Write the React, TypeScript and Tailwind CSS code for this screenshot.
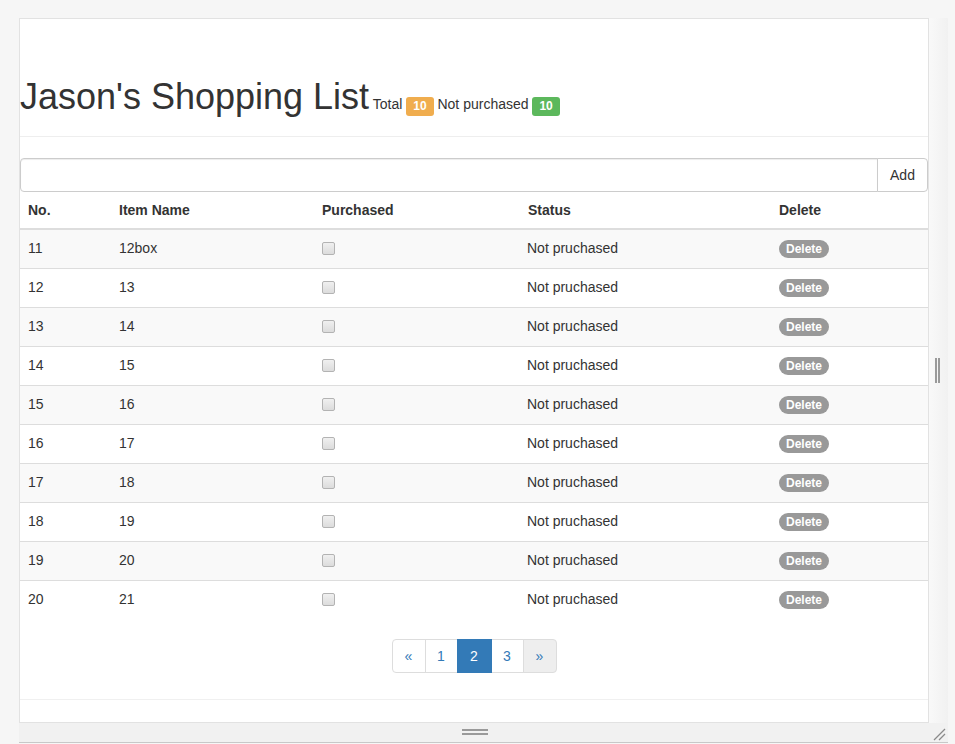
import React from "react";

const rows = [
  { no: 11, name: "12box" },
  { no: 12, name: "13" },
  { no: 13, name: "14" },
  { no: 14, name: "15" },
  { no: 15, name: "16" },
  { no: 16, name: "17" },
  { no: 17, name: "18" },
  { no: 18, name: "19" },
  { no: 19, name: "20" },
  { no: 20, name: "21" },
];

const grid = "grid grid-cols-[91px_203px_206px_251px_157px]";

export default function App() {
  return (
    <div className="min-h-[744px] w-[955px] bg-[#f6f6f6] font-['Liberation_Sans',Arial,sans-serif] text-[14px] text-[#333] pt-[18px] pl-[19px]">
      <div className="flex">
        {/* panel */}
        <div className="w-[910px] h-[705px] bg-white border border-[#e2e2e2] flex flex-col">
          <div className="pt-[58px] pb-[19px] border-b border-[#eee]">
            <h1 className="text-[36px] leading-[40px] font-normal whitespace-nowrap">
              Jason's Shopping List
              <span className="text-[14px] leading-none">
                {" "}Total{" "}
                <span className="inline-block bg-[#f0ad4e] text-white font-bold text-[12px] leading-none px-[7px] pt-[3px] pb-[4px] rounded-[3px] relative top-[1px]">10</span>
                {" "}Not purchased{" "}
                <span className="inline-block bg-[#5cb85c] text-white font-bold text-[12px] leading-none px-[7px] pt-[3px] pb-[4px] rounded-[3px] relative top-[1px]">10</span>
              </span>
            </h1>
          </div>

          <div className="mt-[21px] flex h-[34px]">
            <div className="flex-1 border border-[#ccc] rounded-l-[4px] shadow-[inset_0_1px_1px_rgba(0,0,0,0.075)]" />
            <div className="-ml-px w-[51px] border border-[#ccc] rounded-r-[4px] bg-white flex items-center justify-center text-[#333]">
              Add
            </div>
          </div>

          {/* table */}
          <div className={`${grid} h-[38px] border-b-2 border-[#ddd] font-bold items-center`}>
            <div className="pl-2">No.</div>
            <div className="pl-2">Item Name</div>
            <div className="pl-2">Purchased</div>
            <div className="pl-2">Status</div>
            <div className="pl-2">Delete</div>
          </div>
          {rows.map((r, i) => (
            <div
              key={r.no}
              className={`${grid} items-center pb-[1px] ${i === 0 ? "h-[38px]" : "h-[39px] border-t border-[#ddd]"} ${i % 2 === 0 ? "bg-[#f9f9f9]" : "bg-white"}`}
            >
              <div className="pl-2">{r.no}</div>
              <div className="pl-2">{r.name}</div>
              <div className="pl-2 flex items-center">
                <span className="block w-[13px] h-[13px] border border-[#b3b3b3] rounded-[2px] bg-gradient-to-b from-[#f0f0f0] to-[#dcdcdc]" />
              </div>
              <div className="pl-[7px]">Not pruchased</div>
              <div className="pl-2 flex items-center">
                <span className="inline-block bg-[#999] text-white font-bold text-[12px] leading-none px-[7px] pt-[3px] pb-[3px] rounded-[10px]">Delete</span>
              </div>
            </div>
          ))}

          <div className="mt-[20px] flex justify-center">
            <div className="flex h-[34px] text-[#337ab7]">
              <div className="w-[34px] border border-[#ddd] rounded-l-[4px] bg-white flex items-center justify-center">«</div>
              <div className="-ml-px w-[33px] border border-[#ddd] bg-white flex items-center justify-center">1</div>
              <div className="-ml-px w-[35px] border border-[#337ab7] bg-[#337ab7] text-white flex items-center justify-center relative">2</div>
              <div className="-ml-px w-[33px] border border-[#ddd] bg-white flex items-center justify-center">3</div>
              <div className="-ml-px w-[34px] border border-[#ddd] rounded-r-[4px] bg-[#eee] flex items-center justify-center">»</div>
            </div>
          </div>

          <div className="mt-[26px] border-t border-[#f0f0f0]" />
        </div>

        {/* right gutter */}
        <div className="w-[19px] h-[705px] bg-gradient-to-r from-[#f9f9f9] to-[#f1f1f1] flex items-center justify-center">
          <div className="flex gap-[1px] ml-[-3px]">
            <div className="w-[2px] h-[25px] bg-[#9a9a9a]" />
            <div className="w-[2px] h-[25px] bg-[#9a9a9a]" />
          </div>
        </div>
      </div>

      {/* bottom gutter */}
      <div className="relative w-[929px] h-[20px] bg-[#f1f1f1] border-b border-[#c8c8c8] flex justify-center pt-[6px]">
        <div className="flex flex-col gap-[2px] ml-[-18px]">
          <div className="w-[26px] h-[2px] bg-[#9a9a9a]" />
          <div className="w-[26px] h-[2px] bg-[#9a9a9a]" />
        </div>
        <svg className="absolute right-[2px] bottom-[1px]" width="14" height="14" viewBox="0 0 14 14">
          <line x1="2" y1="13" x2="13" y2="2" stroke="#8a8a8a" strokeWidth="1.2" />
          <line x1="7" y1="13" x2="13" y2="7" stroke="#8a8a8a" strokeWidth="1.2" />
        </svg>
      </div>
    </div>
  );
}
